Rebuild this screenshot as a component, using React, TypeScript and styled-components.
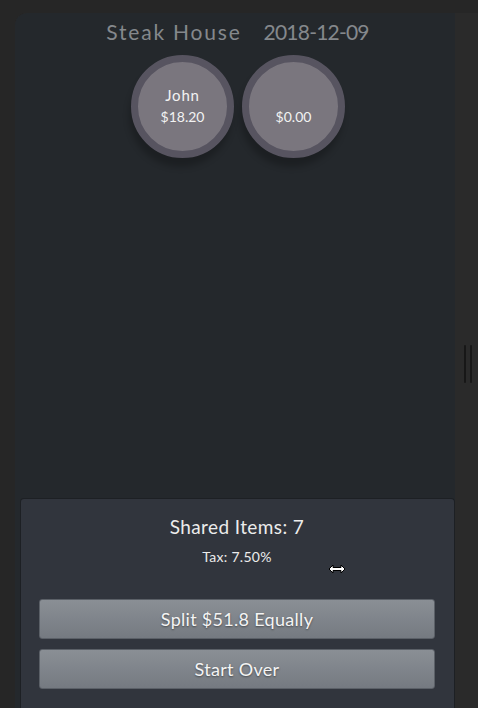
import React from "react";
import styled, { createGlobalStyle } from "styled-components";

const Global = createGlobalStyle`
  html, body { margin: 0; padding: 0; background: #262626; height: 100%; overflow: hidden; }
  #root { height: 100%; }
  * { box-sizing: border-box; }
`;

const FONT = `"Lato", "Open Sans", sans-serif`;

const Outer = styled.div`
  display: flex;
  height: 695px;
  margin: 13px 0 0 15px;
  background: #2a2a2a;
  border-top-left-radius: 12px;
  overflow: hidden;
`;

const Main = styled.div`
  width: 440px;
  flex: none;
  display: flex;
  flex-direction: column;
  background: #24282c;
  padding-left: 5px;
  border-top-left-radius: 12px;
  font-family: ${FONT};
`;

const Side = styled.div`
  flex: 1;
  display: flex;
  align-items: center;
  justify-content: center;
  padding-left: 2px;
  padding-top: 6px;
`;

const Grip = styled.div`
  display: flex;
  gap: 4px;
`;

const GripBar = styled.div`
  width: 2px;
  height: 38px;
  background: #171717;
  border-radius: 1px;
`;

const Header = styled.div`
  display: flex;
  justify-content: center;
  gap: 22px;
  padding-top: 7px;
  height: 42px;
  color: #85888c;
  font-size: 21px;
  font-weight: 400;
  line-height: 24px;
`;

const HeaderText = styled.span<{ $spacing: number }>`
  letter-spacing: ${(p) => p.$spacing}px;
`;

const Circles = styled.div`
  display: flex;
  justify-content: center;
  gap: 8px;
  padding-left: 1px;
`;

const Circle = styled.div`
  width: 103px;
  height: 103px;
  border-radius: 50%;
  border: 7px solid #575460;
  background: #7a767e;
  box-shadow: -2px 9px 6px rgba(0, 0, 0, 0.22);
  display: flex;
  flex-direction: column;
  align-items: center;
  justify-content: center;
  color: #f2f2f2;
  padding-bottom: 1px;
`;

const Name = styled.div`
  font-size: 15px;
  letter-spacing: 0.8px;
  line-height: 20px;
  height: 20px;
`;

const Amount = styled.div`
  font-size: 14px;
  line-height: 20px;
  margin-top: 2px;
`;

const Spacer = styled.div`
  flex: 1;
`;

const Bottom = styled.div`
  position: relative;
  height: 210px;
  flex: none;
  background: #31353d;
  border: 1px solid #1d2024;
  border-bottom: none;
  border-radius: 4px 4px 0 0;
  padding: 16px 19px 0 18px;
  display: flex;
  flex-direction: column;
  align-items: center;
  color: #ececec;
`;

const Shared = styled.div`
  font-size: 19px;
  letter-spacing: 0.4px;
  line-height: 24px;
`;

const Tax = styled.div`
  font-size: 14px;
  letter-spacing: 0.3px;
  margin-top: 9px;
  line-height: 18px;
  margin-bottom: 33px;
`;

const Button = styled.button`
  width: 100%;
  height: 40px;
  border: 1px solid #5b6067;
  border-radius: 3px;
  background: linear-gradient(#8a8f95, #757a81);
  color: #f4f4f4;
  font-family: ${FONT};
  font-size: 18px;
  letter-spacing: 0.3px;
  text-shadow: 0 1px 2px rgba(0, 0, 0, 0.45);
  cursor: pointer;
  & + & { margin-top: 10px; }
`;

const Cursor = styled.svg`
  position: absolute;
  left: 307px;
  top: 65px;
`;

export default function App() {
  return (
    <>
      <Global />
      <Outer>
        <Main>
          <Header>
            <HeaderText $spacing={1.8}>Steak House</HeaderText>
            <HeaderText $spacing={-0.8}>2018-12-09</HeaderText>
          </Header>
          <Circles>
            <Circle>
              <Name>John</Name>
              <Amount>$18.20</Amount>
            </Circle>
            <Circle>
              <Name></Name>
              <Amount>$0.00</Amount>
            </Circle>
          </Circles>
          <Spacer />
          <Bottom>
            <Shared>Shared Items: 7</Shared>
            <Tax>Tax: 7.50%</Tax>
            <Button>Split $51.8 Equally</Button>
            <Button>Start Over</Button>
            <Cursor width="18" height="10" viewBox="0 0 18 10">
              <path
                d="M1 5 L5 1 L5 3.5 L13 3.5 L13 1 L17 5 L13 9 L13 6.5 L5 6.5 L5 9 Z"
                fill="#fff"
                stroke="#000"
                strokeWidth="1"
              />
            </Cursor>
          </Bottom>
        </Main>
        <Side>
          <Grip>
            <GripBar />
            <GripBar />
          </Grip>
        </Side>
      </Outer>
    </>
  );
}
